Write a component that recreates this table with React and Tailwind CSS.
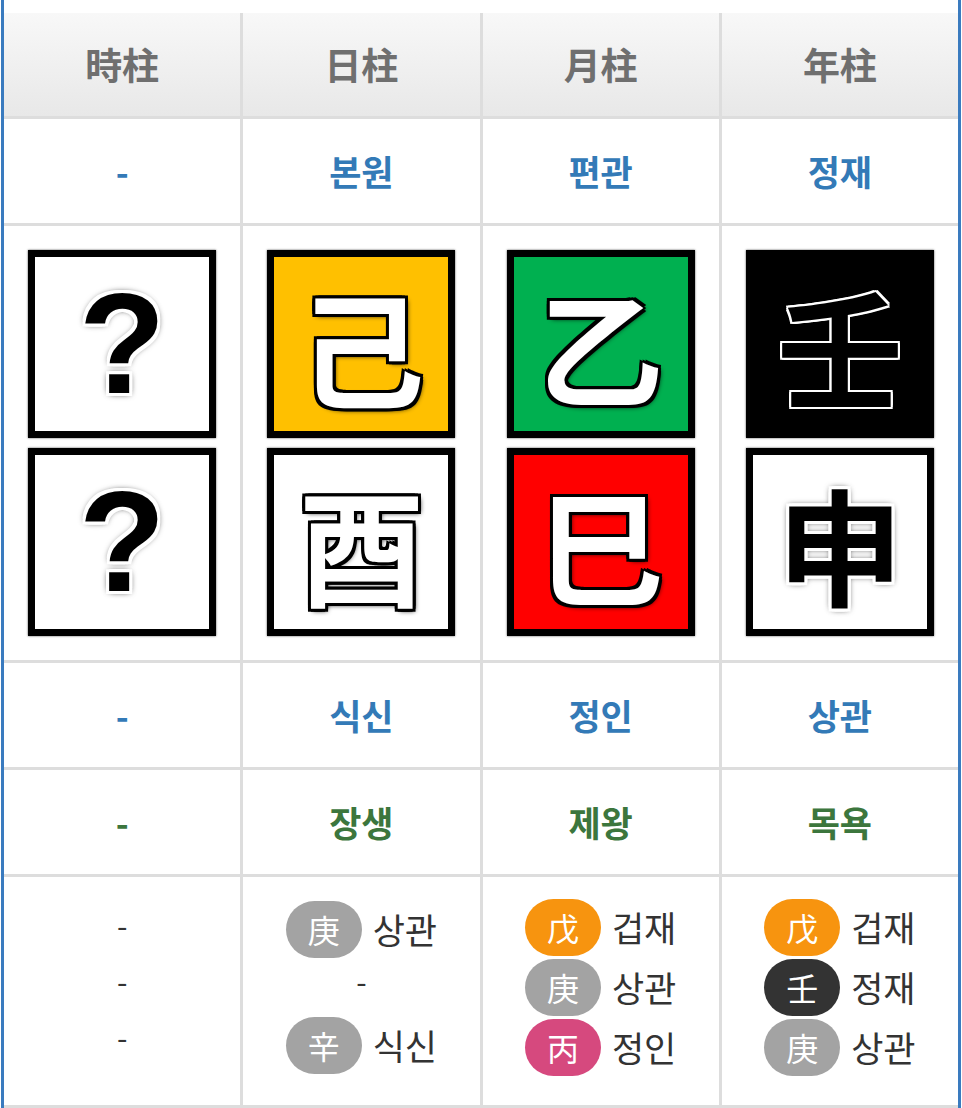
import React from "react";

const FONT = { fontFamily: '"Noto Sans CJK KR", "Noto Sans", sans-serif' };

function HeaderCell({ children }) {
  return (
    <div className="h-[103px] flex items-center justify-center bg-linear-to-b from-[#f8f8f8] to-[#e8e8e8] text-[37px] font-bold text-[#6f6f6f]">
      {children}
    </div>
  );
}

function LabelCell({ children, green }) {
  return (
    <div
      className={
        "h-[104px] flex items-center justify-center bg-white text-[35px] font-bold " +
        (green ? "text-[#3c763d]" : "text-[#337ab7]")
      }
    >
      {children}
    </div>
  );
}

const WHITE_ON_COLOR =
  "text-white [text-shadow:-3px_-3px_0_#000,3px_-3px_0_#000,-3px_3px_0_#000,3px_3px_0_#000,0_-3px_0_#000,0_3px_0_#000,-3px_0_0_#000,3px_0_0_#000,2px_2px_5px_#000]";
const BLACK_ON_WHITE =
  "text-black [text-shadow:-3px_-3px_0_#fff,3px_-3px_0_#fff,-3px_3px_0_#fff,3px_3px_0_#fff,0_-3px_0_#fff,0_3px_0_#fff,-3px_0_0_#fff,3px_0_0_#fff,1px_1px_6px_#555,-1px_-1px_6px_#555]";
const BLACK_ON_BLACK =
  "text-black [text-shadow:-2px_-2px_0_#fff,2px_-2px_0_#fff,-2px_2px_0_#fff,2px_2px_0_#fff,0_-2px_0_#fff,0_2px_0_#fff,-2px_0_0_#fff,2px_0_0_#fff]";

function Box({ bg, textCls, children, q }) {
  return (
    <div
      className={
        "w-[188px] h-[188px] border-[7px] border-black flex items-center justify-center overflow-hidden shadow-[0_0_2px_#555] " +
        bg
      }
    >
      <span
        className={
          (q
            ? "text-[142px] font-bold leading-none "
            : "text-[126px] font-bold leading-none ") + textCls
        }
        style={
          q
            ? { fontFamily: '"Liberation Sans", Arial, sans-serif' }
            : FONT
        }
      >
        {children}
      </span>
    </div>
  );
}

function BoxCell({ children }) {
  return (
    <div className="h-[434px] bg-white flex flex-col items-center justify-center gap-[10px]">
      {children}
    </div>
  );
}

function Badge({ color, ch }) {
  return (
    <div
      className={
        "w-[76px] h-[57px] rounded-full flex items-center justify-center text-white text-[32px] " +
        color
      }
    >
      {ch}
    </div>
  );
}

function Line({ color, ch, label }) {
  return (
    <div className="flex items-center gap-[11px]">
      <Badge color={color} ch={ch} />
      <span className="text-[35px] text-[#333]">{label}</span>
    </div>
  );
}

function Dash({ h }) {
  return (
    <div className={"flex items-center justify-center pb-[14px] text-[30px] text-[#333] " + h}>
      -
    </div>
  );
}

const GRAY = "bg-[#a3a3a3]";
const ORANGE = "bg-[#f7940f]";
const PINK = "bg-[#d6497e]";
const DARK = "bg-[#333333]";

export default function App() {
  return (
    <div className="w-[962px] h-[1108px] overflow-hidden bg-white" style={FONT}>
      <div className="ml-px w-[960px] h-[1108px] border-x-[3px] border-[#3a7bbf] pt-[13px]">
        <div className="grid grid-cols-4 gap-[3px] bg-[#dddddd]">
          <HeaderCell>時柱</HeaderCell>
          <HeaderCell>日柱</HeaderCell>
          <HeaderCell>月柱</HeaderCell>
          <HeaderCell>年柱</HeaderCell>

          <LabelCell>-</LabelCell>
          <LabelCell>본원</LabelCell>
          <LabelCell>편관</LabelCell>
          <LabelCell>정재</LabelCell>

          <BoxCell>
            <Box bg="bg-white" textCls={BLACK_ON_WHITE} q>?</Box>
            <Box bg="bg-white" textCls={BLACK_ON_WHITE} q>?</Box>
          </BoxCell>
          <BoxCell>
            <Box bg="bg-[#ffc000]" textCls={WHITE_ON_COLOR}>己</Box>
            <Box bg="bg-white" textCls={WHITE_ON_COLOR}>酉</Box>
          </BoxCell>
          <BoxCell>
            <Box bg="bg-[#00b050]" textCls={WHITE_ON_COLOR}>乙</Box>
            <Box bg="bg-[#ff0000]" textCls={WHITE_ON_COLOR}>巳</Box>
          </BoxCell>
          <BoxCell>
            <Box bg="bg-black" textCls={BLACK_ON_BLACK}>壬</Box>
            <Box bg="bg-white" textCls={BLACK_ON_WHITE}>申</Box>
          </BoxCell>

          <LabelCell>-</LabelCell>
          <LabelCell>식신</LabelCell>
          <LabelCell>정인</LabelCell>
          <LabelCell>상관</LabelCell>

          <LabelCell green>-</LabelCell>
          <LabelCell green>장생</LabelCell>
          <LabelCell green>제왕</LabelCell>
          <LabelCell green>목욕</LabelCell>

          <div className="h-[228px] bg-white flex flex-col items-center justify-center pb-[8px]">
            <Dash h="h-[56px]" />
            <Dash h="h-[56px]" />
            <Dash h="h-[56px]" />
          </div>
          <div className="h-[228px] bg-white flex flex-col items-center justify-center gap-[3px] pb-[8px]">
            <Line color={GRAY} ch="庚" label="상관" />
            <Dash h="h-[53px]" />
            <Line color={GRAY} ch="辛" label="식신" />
          </div>
          <div className="h-[228px] bg-white flex flex-col items-center justify-center gap-[3px] pb-[8px]">
            <Line color={ORANGE} ch="戊" label="겁재" />
            <Line color={GRAY} ch="庚" label="상관" />
            <Line color={PINK} ch="丙" label="정인" />
          </div>
          <div className="h-[228px] bg-white flex flex-col items-center justify-center gap-[3px] pb-[8px]">
            <Line color={ORANGE} ch="戊" label="겁재" />
            <Line color={DARK} ch="壬" label="정재" />
            <Line color={GRAY} ch="庚" label="상관" />
          </div>

          <div className="h-[40px] bg-white" />
          <div className="h-[40px] bg-white" />
          <div className="h-[40px] bg-white" />
          <div className="h-[40px] bg-white" />
        </div>
      </div>
    </div>
  );
}
